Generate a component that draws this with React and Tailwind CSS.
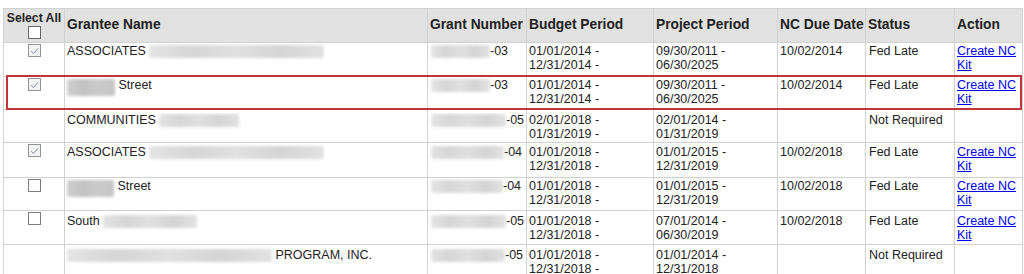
import React from "react";

const GRID = "grid grid-cols-[61px_363px_99px_127px_124px_88px_89px_68px]";

function Blur({ w, dark, tall }) {
  return (
    <span
      className={
        "inline-block shrink-0 rounded-[2px] blur-[1.5px] " +
        (tall ? "h-[17px] " : "h-[13px] ") +
        (dark
          ? "bg-[linear-gradient(90deg,#cfcfcf,#c2c2c2_35%,#cbcbcb_65%,#c4c4c4)]"
          : "bg-[linear-gradient(90deg,#e4e4e4,#d6d6d6_25%,#e0e0e0_50%,#d4d4d4_75%,#e2e2e2)]")
      }
      style={{ width: w }}
    />
  );
}

function Check({ checked, header }) {
  if (header) {
    return <span className="block w-[13px] h-[13px] border border-[#666] bg-white" />;
  }
  return (
    <span
      className={
        "flex items-center justify-center w-[13px] h-[13px] border " +
        (checked ? "border-[#949494] bg-[#f3f3f3]" : "border-[#7d7d7d] bg-white")
      }
    >
      {checked && (
        <svg width="9" height="8" viewBox="0 0 9 8" fill="none">
          <path d="M1 4.2 L3.4 6.4 L8 1.4" stroke="#8591a8" strokeWidth="1" />
        </svg>
      )}
    </span>
  );
}

const rows = [
  {
    h: "h-[34px]", pt: "pt-[1px]", check: "checked",
    name: [["t", "ASSOCIATES "], ["b", 175]],
    gb: 59, gn: "-03",
    bud: ["01/01/2014 -", "12/31/2014 -"], proj: ["09/30/2011 -", "06/30/2025"],
    due: "10/02/2014", status: "Fed Late", link: true,
  },
  {
    h: "h-[33px]", pt: "pt-[1px]", check: "checked",
    name: [["bd", 48], ["t", " Street"]],
    gb: 59, gn: "-03",
    bud: ["01/01/2014 -", "12/31/2014 -"], proj: ["09/30/2011 -", "06/30/2025"],
    due: "10/02/2014", status: "Fed Late", link: true,
  },
  {
    h: "h-[33px]", pt: "pt-[3px]", check: null, clip: true,
    name: [["t", "COMMUNITIES "], ["b", 80]],
    gb: 75, gn: "-05",
    bud: ["02/01/2018 -", "01/31/2019 -"], proj: ["02/01/2014 -", "01/31/2019"],
    due: "", status: "Not Required", link: false,
  },
  {
    h: "h-[35px]", pt: "pt-[2px]", check: "checked",
    name: [["t", "ASSOCIATES "], ["b", 175]],
    gb: 73, gn: "-04",
    bud: ["01/01/2018 -", "12/31/2018 -"], proj: ["01/01/2015 -", "12/31/2019"],
    due: "10/02/2018", status: "Fed Late", link: true,
  },
  {
    h: "h-[33px]", pt: "pt-[1px]", check: "unchecked",
    name: [["bd", 47], ["t", " Street"]],
    gb: 72, gn: "-04",
    bud: ["01/01/2018 -", "12/31/2018 -"], proj: ["01/01/2015 -", "12/31/2019"],
    due: "10/02/2018", status: "Fed Late", link: true,
  },
  {
    h: "h-[34px]", pt: "pt-[3px]", check: "unchecked",
    name: [["t", "South "], ["b", 94]],
    gb: 75, gn: "-05",
    bud: ["01/01/2018 -", "12/31/2018 -"], proj: ["07/01/2014 -", "06/30/2019"],
    due: "10/02/2018", status: "Fed Late", link: true,
  },
  {
    h: "h-[34px]", pt: "pt-[3px]", check: null,
    name: [["b", 205], ["t", " PROGRAM, INC."]],
    gb: 74, gn: "-05",
    bud: ["01/01/2018 -", "12/31/2018 -"], proj: ["01/01/2014 -", "12/31/2018"],
    due: "", status: "Not Required", link: false,
  },
];

const cell = "border-r border-b border-[#d2d2d2] overflow-hidden";

function Lines({ lines }) {
  return (
    <div>
      {lines.map((l, i) => (
        <div key={i} className="whitespace-nowrap">{l}</div>
      ))}
    </div>
  );
}

function Row({ r }) {
  const inner = r.clip ? "h-[25px] overflow-hidden" : "";
  return (
    <div className={GRID + " " + r.h}>
      <div className={cell + " flex justify-center pt-[1px]"}>
        {r.check && <Check checked={r.check === "checked"} />}
      </div>
      <div className={cell + " pl-[2px] " + r.pt}>
        <div className={"flex items-start whitespace-pre " + inner}>
          {r.name.map(([k, v], i) =>
            k === "t" ? (
              <span key={i}>{v}</span>
            ) : (
              <span key={i} className="pt-[1px]">
                <Blur w={v} dark={k === "bd"} tall={k === "bd"} />
              </span>
            )
          )}
        </div>
      </div>
      <div className={cell + " pl-[3px] " + r.pt}>
        <div className={"flex items-start " + inner}>
          <span className="pt-[1px]"><Blur w={r.gb} /></span>
          <span>{r.gn}</span>
        </div>
      </div>
      <div className={cell + " pl-[2px] " + r.pt}>
        <div className={inner}><Lines lines={r.bud} /></div>
      </div>
      <div className={cell + " pl-[2px] " + r.pt}>
        <div className={inner}><Lines lines={r.proj} /></div>
      </div>
      <div className={cell + " pl-[2px] " + r.pt}>
        <div className={inner}>{r.due}</div>
      </div>
      <div className={cell + " pl-[3px] " + r.pt}>
        <div className={"whitespace-nowrap " + inner}>{r.status}</div>
      </div>
      <div className={cell + " pl-[2px] " + r.pt}>
        {r.link && (
          <a href="#" className="text-[#0000ee] underline underline-offset-[1px]">
            Create NC Kit
          </a>
        )}
      </div>
    </div>
  );
}

export default function App() {
  const th = "border-r border-b border-[#d2d2d2] pl-[2px] flex items-center font-bold text-[13.8px] text-[#222]";
  return (
    <div className="w-[1024px] h-[274px] overflow-hidden bg-white font-['Liberation_Sans',Arial,sans-serif] text-[12.5px] leading-[14.3px] text-[#222]">
      <div className="relative ml-[3px] mt-[8px] w-[1020px] border-l border-t border-[#d2d2d2]">
        <div className={GRID + " h-[34px] bg-[#e1e1e1]"}>
          <div className="border-r border-b border-[#d2d2d2] flex flex-col items-center pt-[2px]">
            <span className="font-bold text-[12.2px] leading-[14px] whitespace-nowrap">Select All</span>
            <span className="mt-[1px]"><Check header /></span>
          </div>
          <div className={th}>Grantee Name</div>
          <div className={th + " whitespace-nowrap"}>Grant Number</div>
          <div className={th}>Budget Period</div>
          <div className={th}>Project Period</div>
          <div className={th + " whitespace-nowrap"}>NC Due Date</div>
          <div className={th}>Status</div>
          <div className={th}>Action</div>
        </div>
        {rows.map((r, i) => (
          <Row key={i} r={r} />
        ))}
        <div className="absolute left-[2px] top-[66px] w-[1016px] h-[35px] border-2 border-[#c0353b] pointer-events-none" />
      </div>
    </div>
  );
}
